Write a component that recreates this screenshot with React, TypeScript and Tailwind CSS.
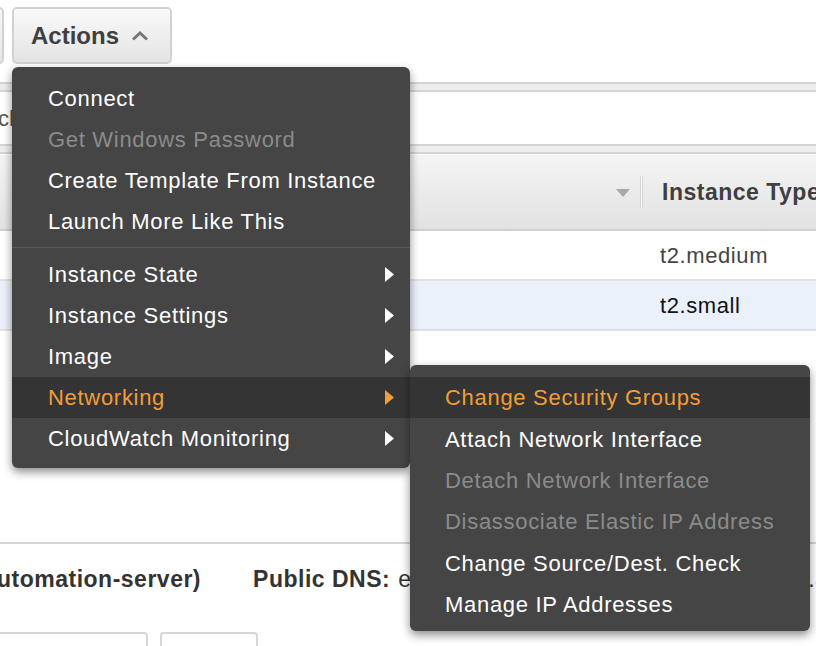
import React from "react";

type Item = {
  label: string;
  disabled?: boolean;
  active?: boolean;
  sub?: boolean;
  sep?: boolean;
};

const actions: Item[] = [
  { label: "Connect" },
  { label: "Get Windows Password", disabled: true },
  { label: "Create Template From Instance" },
  { label: "Launch More Like This" },
  { label: "", sep: true },
  { label: "Instance State", sub: true },
  { label: "Instance Settings", sub: true },
  { label: "Image", sub: true },
  { label: "Networking", sub: true, active: true },
  { label: "CloudWatch Monitoring", sub: true },
];

const networking: Item[] = [
  { label: "Change Security Groups", active: true },
  { label: "Attach Network Interface" },
  { label: "Detach Network Interface", disabled: true },
  { label: "Disassociate Elastic IP Address", disabled: true },
  { label: "Change Source/Dest. Check" },
  { label: "Manage IP Addresses" },
];

const Arrow = ({ active }: { active?: boolean }) => (
  <svg width="9" height="15" viewBox="0 0 9 15" className="shrink-0">
    <path d="M0 0 L9 7.5 L0 15 Z" fill={active ? "#f29d38" : "#ffffff"} />
  </svg>
);

const MenuRow = ({ item, pad, h }: { item: Item; pad: string; h: string }) => {
  if (item.sep) return <div className="mt-[5px] mb-[6px] h-px bg-[#575757]" />;
  const color = item.disabled
    ? "text-[#8b8b8b]"
    : item.active
    ? "text-[#f29d38]"
    : "text-white";
  return (
    <div
      className={`flex items-center justify-between pr-[16px] ${h} ${pad} ${
        item.active ? "bg-[#343434]" : ""
      }`}
    >
      <span className={`text-[22px] tracking-[0.7px] ${color}`}>{item.label}</span>
      {item.sub && <Arrow active={item.active} />}
    </div>
  );
};

export default function App() {
  return (
    <div className="relative h-[646px] w-[816px] overflow-hidden bg-white font-['Liberation_Sans',Arial,sans-serif] text-[#444]">
      {/* toolbar */}
      <div className="flex h-[82px] items-start gap-[8px] pt-[7px]">
        <div className="-ml-[100px] h-[57px] w-[104px] rounded-[5px] border-2 border-[#d2d2d2] bg-gradient-to-b from-[#f7f7f7] to-[#e6e6e6]" />
        <div className="flex h-[57px] w-[160px] items-center gap-[12px] rounded-[5px] border-2 border-[#d2d2d2] bg-gradient-to-b from-[#f9f9f9] to-[#e4e4e4] pl-[17px]">
          <span className="text-[24px] font-bold text-[#3f3f3f]">Actions</span>
          <svg width="18" height="10" viewBox="0 0 18 10">
            <path d="M2 8.5 L9 2 L16 8.5" fill="none" stroke="#777" strokeWidth="3" />
          </svg>
        </div>
      </div>
      <div className="h-[10px] border-y-2 border-[#d4d4d4] bg-[#ededed]" />

      {/* search */}
      <div className="flex h-[52px] items-center">
        <span className="-ml-[2px] text-[22px] text-[#555]">ch</span>
      </div>
      <div className="h-[10px] border-y-2 border-[#d4d4d4] bg-[#ededed]" />

      {/* table header */}
      <div className="relative flex h-[77px] items-center border-t border-white border-b-2 border-b-[#d0d0d0] bg-gradient-to-b from-[#f4f4f4] to-[#e2e2e2]">
        <svg width="14" height="8" viewBox="0 0 14 8" className="ml-[616px] mt-[2px] shrink-0">
          <path d="M0 0 L14 0 L7 8 Z" fill="#a9a9a9" />
        </svg>
        <div className="ml-[10px] h-[32px] w-[3px] shrink-0 border-x border-x-[#d4d4d4] bg-white" />
        <span className="ml-[19px] whitespace-nowrap text-[23px] font-bold tracking-[0.5px] text-[#3f3f3f]">
          Instance Type
        </span>
      </div>
      <div className="flex h-[50px] items-center border-b-2 border-[#e2e2e2]">
        <span className="ml-[660px] text-[22px] tracking-[0.6px] text-[#444]">t2.medium</span>
      </div>
      <div className="flex h-[50px] items-center border-b-2 border-[#e0e0e0] bg-[#ebf1fb]">
        <span className="ml-[660px] text-[22px] tracking-[0.6px] text-[#111]">t2.small</span>
      </div>

      {/* details */}
      <div className="mt-[211px] border-t-2 border-[#d6d6d6]">
        <div className="flex h-[70px] items-center whitespace-nowrap text-[23px] tracking-[0.5px] text-[#333]">
          <span className="-ml-[3px] font-bold">utomation-server)</span>
          <span className="ml-[52px] font-bold">Public DNS:</span>
          <span className="ml-[8px]">ec2-18-222-101-17.us-east-2.compute.amazonaws.com</span>
        </div>
        <div className="mt-[18px] flex gap-[12px]">
          <div className="-ml-[20px] h-[40px] w-[168px] rounded-[4px] border-2 border-[#d6d6d6]" />
          <div className="h-[40px] w-[98px] rounded-[4px] border-2 border-[#d6d6d6]" />
        </div>
      </div>

      {/* actions menu */}
      <div className="absolute left-[12px] top-[67px] w-[398px] rounded-[6px] bg-[#454545] pt-[11px] pb-[9px] shadow-[0_4px_10px_rgba(0,0,0,0.45)]">
        {actions.map((item, i) => (
          <MenuRow key={i} item={item} pad="pl-[36px]" h="h-[41px]" />
        ))}
      </div>

      {/* networking submenu */}
      <div className="absolute left-[410px] top-[365px] w-[400px] rounded-[6px] bg-[#454545] pt-[12px] pb-[6px] shadow-[0_4px_10px_rgba(0,0,0,0.45)]">
        {networking.map((item, i) => (
          <MenuRow key={i} item={item} pad="pl-[35px]" h="h-[41.4px]" />
        ))}
      </div>
    </div>
  );
}
